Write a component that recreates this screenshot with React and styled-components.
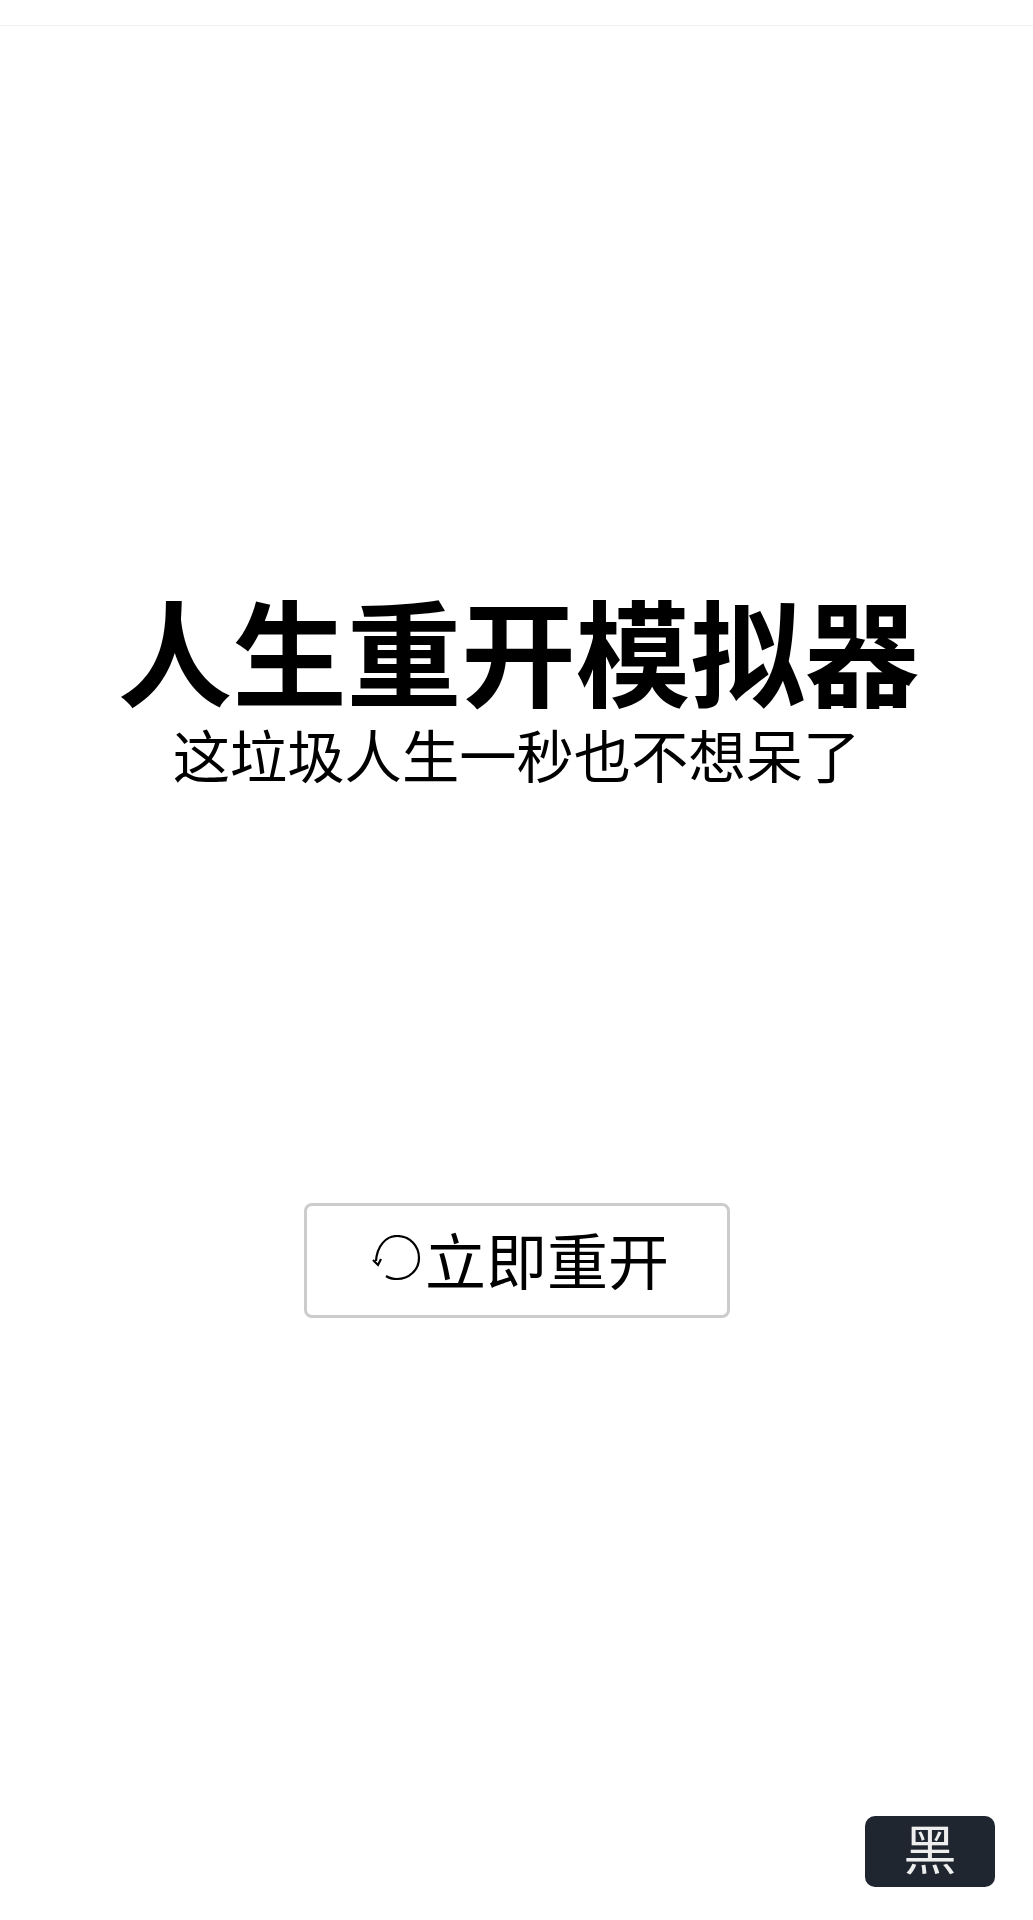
import styled, { createGlobalStyle } from 'styled-components';

const GlobalStyle = createGlobalStyle`
  html, body {
    margin: 0;
    padding: 0;
    background: #fff;
  }
  body {
    font-family: "Noto Sans CJK SC", "Liberation Sans", sans-serif;
    color: #000;
  }
`;

const Page = styled.div`
  position: relative;
  height: 1920px;
  overflow: hidden;
  display: flex;
  flex-direction: column;
  align-items: center;
`;

const TopBar = styled.div`
  align-self: stretch;
  height: 25px;
  border-bottom: 1px solid #f0f0f0;
`;

const Banner = styled.div`
  margin-top: 555px;
  display: flex;
  flex-direction: column;
  align-items: center;
`;

const Title = styled.h1`
  margin: 0 0 0 4px;
  font-size: 114.5px;
  line-height: 134px;
  font-weight: 700;
`;

const Subtitle = styled.div`
  font-size: 57.3px;
  line-height: 78px;
`;

const RestartButton = styled.button`
  margin-top: 410px;
  width: 426px;
  height: 115px;
  box-sizing: border-box;
  display: flex;
  align-items: center;
  justify-content: center;
  gap: 3px;
  padding: 0 0 4px 8px;
  background: #fff;
  border: 3px solid #ccc;
  border-radius: 8px;
  color: #000;
  font-family: inherit;
  font-size: 61px;
  line-height: 1;
  cursor: pointer;
`;

const ThemeToggle = styled.button`
  position: absolute;
  left: 865px;
  top: 1816px;
  width: 130px;
  height: 71px;
  padding: 0 0 8px;
  background: #1f2630;
  color: #eee;
  border: none;
  border-radius: 10px;
  font-family: inherit;
  font-size: 53px;
  line-height: 1;
  cursor: pointer;
`;

function RestartIcon() {
  return (
    <svg width="50" height="48" viewBox="-1 -1 50 48" fill="none" stroke="#000" strokeWidth="2.2">
      <path d="M3 25 C4 10 13 0 24 0 C37 0 46 10 46 22 C46 34 36 43 24 43 C19 43 16 42 13 40" />
      <path d="M0 24 L5 29 L8 23" />
    </svg>
  );
}

function App() {
  return (
    <Page>
      <GlobalStyle />
      <TopBar />
      <Banner>
        <Title>人生重开模拟器</Title>
        <Subtitle>这垃圾人生一秒也不想呆了</Subtitle>
      </Banner>
      <RestartButton>
        <RestartIcon />
        立即重开
      </RestartButton>
      <ThemeToggle>黑</ThemeToggle>
    </Page>
  );
}

export default App;
